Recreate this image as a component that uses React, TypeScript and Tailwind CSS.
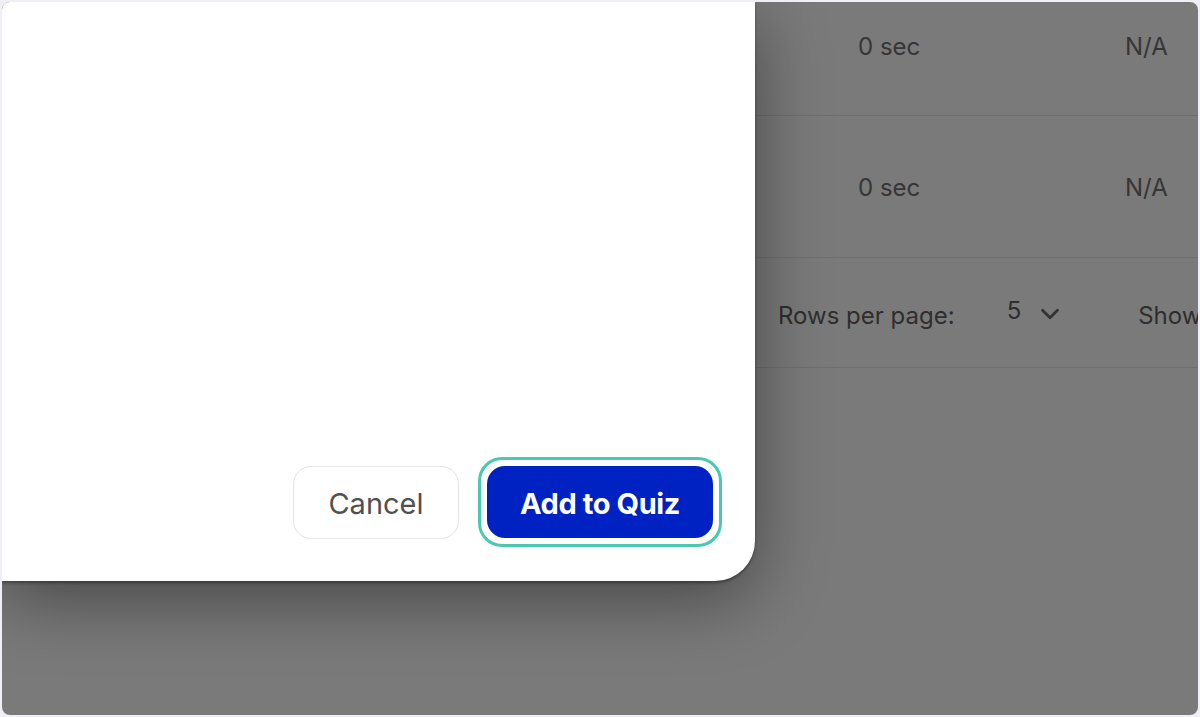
import { ChevronDown } from "lucide-react";

const rows = [
  { time: "0 sec", score: "N/A", height: "h-[114px]", shift: "mt-[27px]" },
  { time: "0 sec", score: "N/A", height: "h-[142px]", shift: "mt-[2px]" },
];

export default function App() {
  return (
    <div className="w-[1200px] h-[717px] bg-[#efeff5] p-[2px] font-['Inter',sans-serif]">
      <div className="relative w-full h-full rounded-[8px] overflow-hidden bg-[#7a7a7a] flex">
        {/* Modal */}
        <div className="relative z-10 w-[753px] h-[579px] shrink-0 bg-white rounded-br-[40px] shadow-[0_18px_70px_rgba(0,0,0,0.42),0_2px_3px_rgba(0,0,0,0.35)] flex items-end justify-end px-[33px] pb-[34px]">
          <div className="flex items-center gap-[19px]">
            <button className="w-[166px] h-[73px] rounded-[18px] border border-[#e3e3e8] bg-white text-[29px] text-[#505050] pt-[3px]">
              Cancel
            </button>
            <div className="rounded-[24px] border-[3px] border-[#4ac9b0] p-[6px]">
              <button className="w-[226px] h-[72px] rounded-[18px] bg-[#0022c2] text-white text-[29px] font-bold tracking-[-0.4px] pt-[3px]">
                Add to Quiz
              </button>
            </div>
          </div>
        </div>

        {/* Table behind the overlay */}
        <div className="flex-1 flex flex-col overflow-hidden">
          {rows.map((r, i) => (
            <div key={i} className={`${r.height} shrink-0 border-b border-[#6f6f6f] flex ${i === 0 ? "items-start" : "items-center"} text-[24px] text-[#363636]`}>
              <span className={`ml-[103px] w-[267px] ${r.shift}`}>{r.time}</span>
              <span className={r.shift}>{r.score}</span>
            </div>
          ))}
          <div className="h-[110px] shrink-0 border-b border-[#6f6f6f] flex items-center text-[24px] text-[#2e2e2e] whitespace-nowrap pt-[6px]">
            <span className="ml-[23px]">Rows per page:</span>
            <span className="ml-[52px] -mt-[10px]">5</span>
            <ChevronDown className="ml-[14px] w-[30px] h-[30px] shrink-0 text-[#333] -mt-[4px]" strokeWidth={2.2} />
            <span className="ml-[73px]">Show</span>
          </div>
        </div>
      </div>
    </div>
  );
}
